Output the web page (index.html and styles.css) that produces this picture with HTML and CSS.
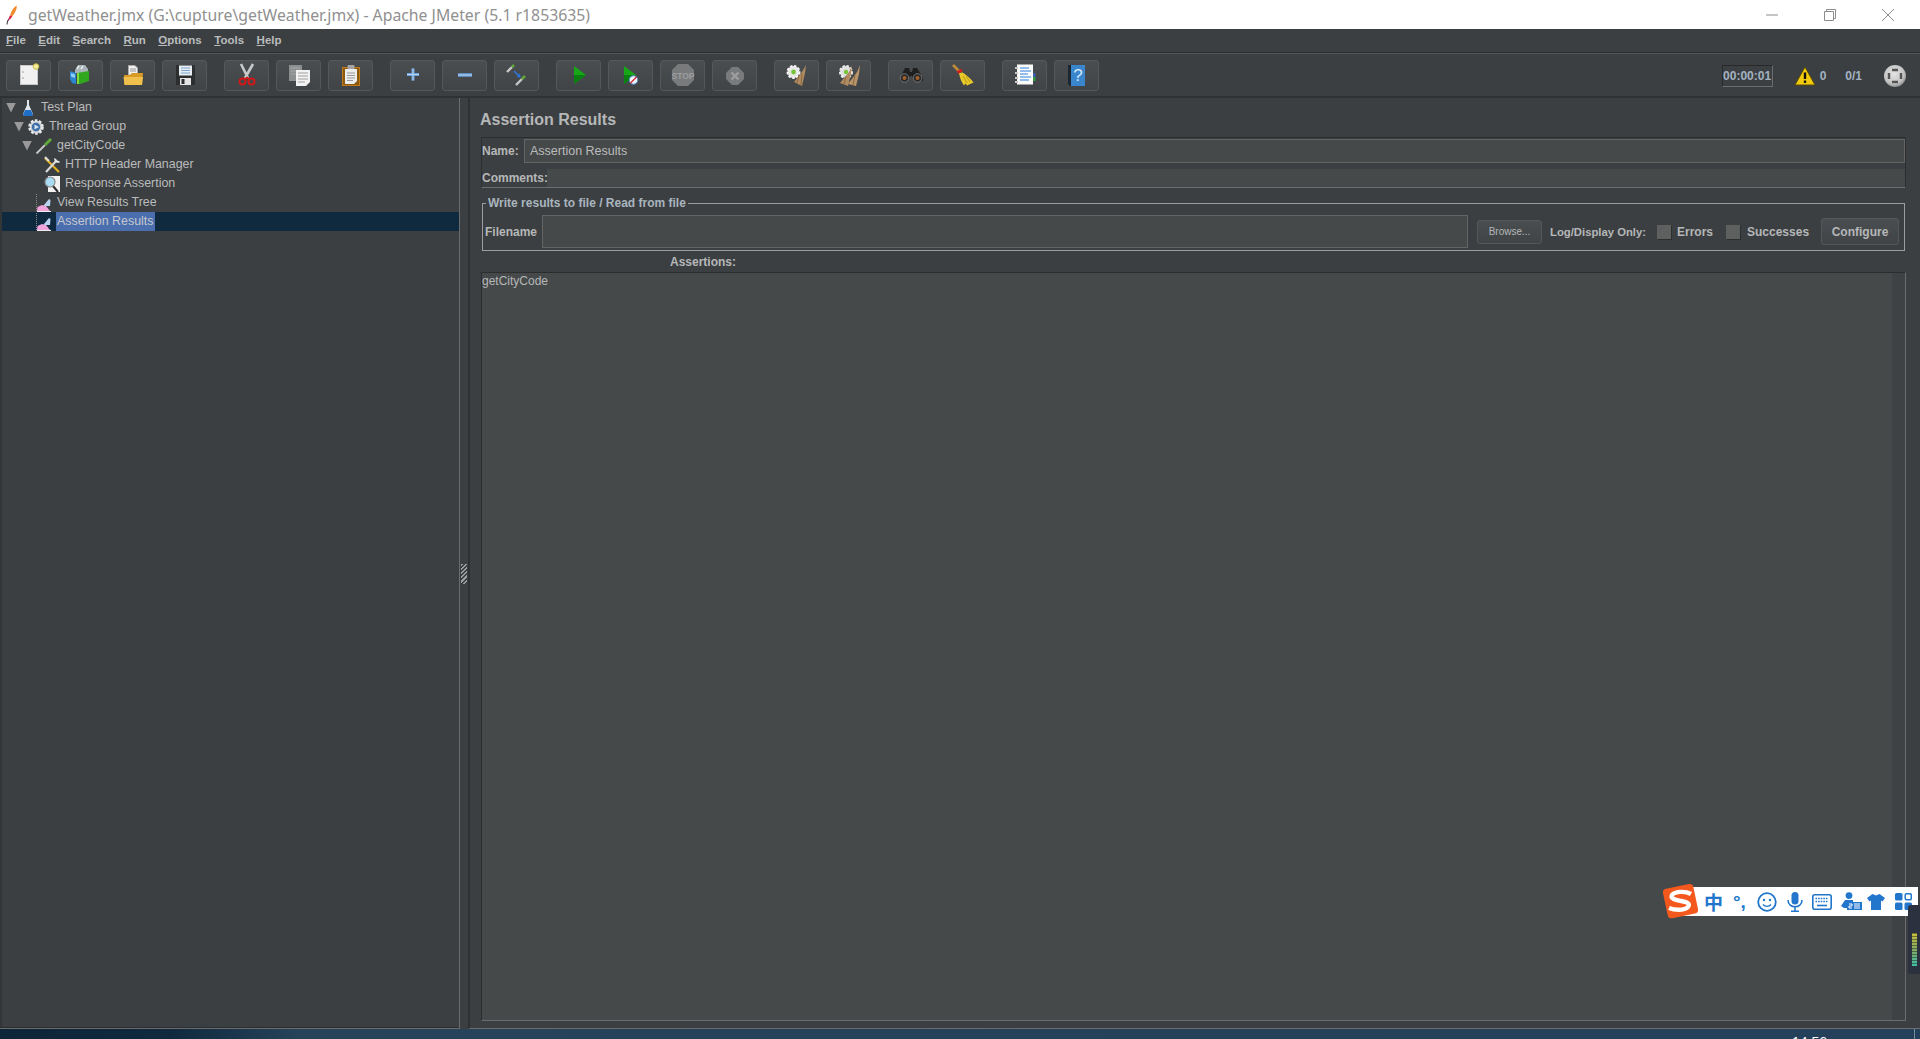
FILE: index.html
```html
<!DOCTYPE html>
<html lang="en">
<head>
    <meta charset="UTF-8">
    <title>getWeather.jmx (G:\cupture\getWeather.jmx) - Apache JMeter (5.1 r1853635)</title>
    <link rel="stylesheet" href="styles.css">
</head>
<body>
    <header class="titlebar">
        <svg class="app-icon" width="12" height="20" viewBox="0 0 12 20">
            <path d="M10.5 0.5C11.5 3 9 8 6.5 11L4 10.5C5 6.5 8 2 10.5 0.5Z" fill="#f08a2c"/>
            <path d="M6.5 11C5.5 12.5 4.5 14 3.5 14.5L2.5 13.5C3 12.5 3.5 11.5 4 10.5Z" fill="#d8203c"/>
            <path d="M3.5 14.5C3 15.5 2.5 16 2 16.2L1.6 15.4C2 14.8 2.2 14.2 2.5 13.5Z" fill="#8c1f6e"/>
            <path d="M1.6 15.4L1 19.5" stroke="#333" stroke-width="1" fill="none"/>
        </svg>
        <span class="window-title">getWeather.jmx (G:\cupture\getWeather.jmx) - Apache JMeter (5.1 r1853635)</span>
        <div class="window-controls">
            <span class="win-btn"><svg width="14" height="14" viewBox="0 0 14 14"><path d="M1 7H13" stroke="#8c8c8c"/></svg></span>
            <span class="win-btn"><svg width="14" height="14" viewBox="0 0 14 14"><path d="M1.5 3.5H10.5V12.5H1.5ZM3.5 3.5V1.5H12.5V10.5H10.5" stroke="#8c8c8c" fill="none"/></svg></span>
            <span class="win-btn"><svg width="14" height="14" viewBox="0 0 14 14"><path d="M1 1L13 13M13 1L1 13" stroke="#8c8c8c"/></svg></span>
        </div>
    </header>

    <nav class="menubar">
        <span class="menu-item"><u>F</u>ile</span>
        <span class="menu-item"><u>E</u>dit</span>
        <span class="menu-item"><u>S</u>earch</span>
        <span class="menu-item"><u>R</u>un</span>
        <span class="menu-item"><u>O</u>ptions</span>
        <span class="menu-item"><u>T</u>ools</span>
        <span class="menu-item"><u>H</u>elp</span>
    </nav>

    <div class="toolbar">
        <div class="tool-group">
            <button class="tool-btn" title="New"><svg width="45" height="31" viewBox="0 0 45 31">
                <rect x="14.5" y="5.5" width="17" height="19" fill="#f1f1f1" stroke="#c8c8c8"/>
                <circle cx="17" cy="12" r=".8" fill="#999"/><circle cx="17" cy="18" r=".8" fill="#999"/>
                <circle cx="30" cy="6.5" r="2.8" fill="#f7ef9a" stroke="#c9b94a"/>
            </svg></button>
            <button class="tool-btn" title="Templates"><svg width="45" height="31" viewBox="0 0 45 31">
                <path d="M17 10L20 5H27L30 9V13H17Z" fill="#a9b4b8"/>
                <path d="M19 9L21 6M23 9L25 6" stroke="#e8eef0" stroke-width="1.4"/>
                <path d="M12 11L18 13V24L14 23L12 19Z" fill="#2b86d0"/>
                <path d="M13 13L17 14.5V18L13 16.5Z" fill="#8fcdf5"/>
                <path d="M19 13L31 11V21L22 24H19Z" fill="#2fa81e"/>
                <path d="M19 13H21V24H19Z" fill="#7ddb40"/>
            </svg></button>
            <button class="tool-btn" title="Open"><svg width="45" height="31" viewBox="0 0 45 31">
                <path d="M18.5 5.5H25L27.5 8V15H18.5Z" fill="#f0f0f0" stroke="#aaa"/>
                <path d="M20 9H26M20 11H26" stroke="#999"/>
                <path d="M14 15H20L22 13H33L32 24.5H14.5Z" fill="#d89c24"/>
                <path d="M13.5 17H33L32 25H14.5Z" fill="#efc04c"/>
            </svg></button>
            <button class="tool-btn" title="Save"><svg width="45" height="31" viewBox="0 0 45 31">
                <path d="M14 5H32L33 6V25H14Z" fill="#2c2e30"/>
                <rect x="17" y="5.5" width="13" height="10" fill="#e8edf2"/>
                <path d="M19 8H28M19 10.5H28M19 13H28" stroke="#7ea6d0"/>
                <rect x="18" y="18" width="11" height="7" fill="#e4e4e4"/>
                <rect x="19.5" y="19" width="3" height="5" fill="#2c2e30"/>
            </svg></button>
        </div>
        <div class="tool-group">
            <button class="tool-btn" title="Cut"><svg width="45" height="31" viewBox="0 0 45 31">
                <path d="M17 4L24 18M29 4L21 18" stroke="#c6c9c9" stroke-width="2.6" fill="none"/>
                <circle cx="18.5" cy="21.5" r="3" fill="none" stroke="#d01818" stroke-width="2"/>
                <circle cx="27.5" cy="21.5" r="3" fill="none" stroke="#d01818" stroke-width="2"/>
                <path d="M21 19L23 17.5L25 19" stroke="#d01818" stroke-width="1.6" fill="none"/>
            </svg></button>
            <button class="tool-btn" title="Copy"><svg width="45" height="31" viewBox="0 0 45 31">
                <rect x="13" y="5" width="13" height="16" fill="#8c8f90"/>
                <path d="M15 8H24M15 11H24M15 14H24" stroke="#a8a8a8"/>
                <path d="M20 10H34V22L30 26H20Z" fill="#f2f2f2"/>
                <path d="M22 13H32M22 16H32M22 19H32M22 22H29" stroke="#a0a0a0"/>
            </svg></button>
            <button class="tool-btn" title="Paste"><svg width="45" height="31" viewBox="0 0 45 31">
                <rect x="14.5" y="7.5" width="17" height="18" fill="#8a5a10" stroke="#bf7a18"/>
                <path d="M17 9H29V21L26 24H17Z" fill="#ededed"/>
                <path d="M19 13H27M19 15.5H27M19 18H27M19 20.5H25" stroke="#9a9a9a"/>
                <rect x="19.5" y="5" width="7" height="4" rx="1" fill="#a5a5a5"/>
            </svg></button>
        </div>
        <div class="tool-group">
            <button class="tool-btn" title="Expand All"><svg width="45" height="31" viewBox="0 0 45 31">
                <path d="M17 14.5H29M23 8.5V20.5" stroke="#6da2dc" stroke-width="3"/>
                <path d="M17 14.5H29M23 8.5V20.5" stroke="#b6d4f2" stroke-width="1"/>
            </svg></button>
            <button class="tool-btn" title="Collapse All"><svg width="45" height="31" viewBox="0 0 45 31">
                <path d="M16 15H30" stroke="#6da2dc" stroke-width="3.5"/>
                <path d="M16 15H30" stroke="#b6d4f2" stroke-width="1"/>
            </svg></button>
            <button class="tool-btn" title="Toggle"><svg width="45" height="31" viewBox="0 0 45 31">
                <path d="M13 12L18 7" stroke="#c8c8c8" stroke-width="2.4"/>
                <path d="M18 7L20 5" stroke="#5fa83a" stroke-width="2.6"/>
                <path d="M22 25L28 19" stroke="#c8c8c8" stroke-width="2.4"/>
                <path d="M28 19L31 16" stroke="#5fa83a" stroke-width="2.6"/>
                <path d="M20 11L25 16" stroke="#2a78e0" stroke-width="1.4"/>
                <path d="M26.5 17.5L22.5 17L26 13.5Z" fill="#2a78e0"/>
            </svg></button>
        </div>
        <div class="tool-group">
            <button class="tool-btn" title="Start"><svg width="45" height="31" viewBox="0 0 45 31">
                <path d="M18 6L30 15L18 24Z" fill="#16a816"/>
                <path d="M18 15H30L18 24Z" fill="#0b7f12"/>
            </svg></button>
            <button class="tool-btn" title="Start no pauses"><svg width="45" height="31" viewBox="0 0 45 31">
                <path d="M16 6L28 15L16 24Z" fill="#16a816"/>
                <path d="M16 15H28L16 24Z" fill="#0b7f12"/>
                <circle cx="25.5" cy="20" r="4.2" fill="#eef4fb" stroke="#5b8ed0"/>
                <path d="M22.5 23L28.5 17" stroke="#d8242c" stroke-width="1.3"/>
            </svg></button>
            <button class="tool-btn" title="Stop"><svg width="45" height="31" viewBox="0 0 45 31">
                <path d="M18 4H28L34 10V20L28 26H18L12 20V10Z" fill="#787a7b"/>
                <text x="23" y="18.5" class="stop-label" text-anchor="middle">STOP</text>
            </svg></button>
            <button class="tool-btn" title="Shutdown"><svg width="45" height="31" viewBox="0 0 45 31">
                <path d="M20 7H26L32 13V19L26 25H20L14 19V13Z" fill="#787a7b"/>
                <path d="M19.5 12.5L26.5 19.5M26.5 12.5L19.5 19.5" stroke="#9c9e9f" stroke-width="2.4"/>
            </svg></button>
        </div>
        <div class="tool-group">
            <button class="tool-btn" title="Clear"><svg width="45" height="31" viewBox="0 0 45 31">
                <circle cx="19.5" cy="12" r="6" fill="#e8e8e8" stroke="#f6f6f6" stroke-width="2" stroke-dasharray="2.5 1.5"/>
                <circle cx="19.5" cy="12" r="2.4" fill="#76c43a"/>
                <path d="M32 5L28 12L20 22L28 26L31 13Z" fill="#b08a60"/>
                <path d="M25 15L23 23M28 14L27 25" stroke="#8a6840"/>
            </svg></button>
            <button class="tool-btn" title="Clear All"><svg width="45" height="31" viewBox="0 0 45 31">
                <circle cx="20" cy="12" r="6" fill="#e0e0e0" stroke="#eee" stroke-width="2" stroke-dasharray="2.5 1.5"/>
                <circle cx="20" cy="12" r="2.2" fill="#76c43a"/>
                <path d="M26 5L23 12L14 23L22 26L25 14Z" fill="#b08a60"/>
                <path d="M34 5L31 12L22 24L30 26L33 14Z" fill="#b89468"/>
                <path d="M20 16L18 24M29 15L27 25" stroke="#8a6840"/>
            </svg></button>
        </div>
        <div class="tool-group">
            <button class="tool-btn" title="Search"><svg width="45" height="31" viewBox="0 0 45 31">
                <path d="M17 8H21L22 12H24L25 8H29L35 18V21H26L24 16H22L20 21H12V18Z" fill="#1f1f1f"/>
                <circle cx="16.5" cy="18" r="4.3" fill="#2a2a2a" stroke="#777"/>
                <circle cx="29.5" cy="18" r="4.3" fill="#2a2a2a" stroke="#777"/>
                <circle cx="16.5" cy="18" r="2" fill="#a3602a"/>
                <circle cx="29.5" cy="18" r="2" fill="#a3602a"/>
            </svg></button>
            <button class="tool-btn" title="Reset Search"><svg width="45" height="31" viewBox="0 0 45 31">
                <path d="M13 5L19 11" stroke="#c08a3a" stroke-width="2.6"/>
                <path d="M19 13C20 19 22 23 24 25.5L25.5 23.5L27 25.5L33.5 22.5C31 19 27 15 22.5 12.5Z" fill="#e8c828"/>
                <path d="M23 16L27 23M26 16L30 22" stroke="#b89a14"/>
                <path d="M17.5 12.5L22 10" stroke="#d01f1f" stroke-width="3"/>
            </svg></button>
        </div>
        <div class="tool-group">
            <button class="tool-btn" title="Function Helper"><svg width="45" height="31" viewBox="0 0 45 31">
                <rect x="15" y="4.5" width="16" height="20" fill="#fbfbfb"/>
                <path d="M18 8H27M18 11H29M18 14H26M18 17H29M18 20H27" stroke="#2b80e0"/>
                <path d="M13 8H16M13 13H16M13 18H16M13 22H16" stroke="#c8c8c8" stroke-width="2"/>
                <rect x="31" y="13" width="2.5" height="4" fill="#3a60b0"/>
                <rect x="31" y="17" width="2.5" height="4" fill="#2f9a40"/>
            </svg></button>
            <button class="tool-btn" title="Help"><svg width="45" height="31" viewBox="0 0 45 31">
                <path d="M14 5H18V26H16L14 24Z" fill="#1b2833"/>
                <rect x="17" y="5" width="14" height="21" fill="#3a86cc"/>
                <text x="24" y="21" class="help-label" text-anchor="middle">?</text>
            </svg></button>
        </div>

        <div class="status">
            <span class="timer">00:00:01</span>
            <svg class="warn-icon" width="22" height="20" viewBox="0 0 22 20">
                <path d="M11 1L21 19H1Z" fill="#f2cc0c" stroke="#5a4c08" stroke-linejoin="round"/>
                <path d="M11 6.5V13" stroke="#111" stroke-width="2.4"/>
                <rect x="9.8" y="14.5" width="2.4" height="2.4" fill="#111"/>
            </svg>
            <span class="error-count">0</span>
            <span class="thread-count">0/1</span>
            <svg class="loggers" width="22" height="22" viewBox="0 0 22 22">
                <defs>
                    <radialGradient id="loggerShade" cx="45%" cy="40%" r="60%">
                        <stop offset="0" stop-color="#e4e4e4"/>
                        <stop offset=".75" stop-color="#c4c4c4"/>
                        <stop offset="1" stop-color="#8e8e8e"/>
                    </radialGradient>
                </defs>
                <circle cx="11" cy="11" r="11" fill="url(#loggerShade)"/>
                <path d="M8 5H14M8 17H14M5 8V14M17 8V14" stroke="#555" stroke-width="2.4" fill="none"/>
            </svg>
        </div>
    </div>

    <main class="workspace">
        <aside class="tree-pane">
            <div class="tree-row lvl-plan">
                <span class="twisty"></span>
                <svg class="tree-icon" width="18" height="18" viewBox="0 0 18 18">
                    <path d="M8 1H10V6L14 15L13 17H5L4 15L8 6Z" fill="#dfe6ee"/>
                    <path d="M6.2 11H11.8L14 15.5L13 17H5L4 15.5Z" fill="#1f6ec8"/>
                </svg>
                <span class="tree-label">Test Plan</span>
            </div>
            <div class="tree-row lvl-group">
                <span class="twisty"></span>
                <svg class="tree-icon" width="18" height="18" viewBox="0 0 18 18">
                    <circle cx="9" cy="9" r="6.5" fill="#c8ccd0" stroke="#e6e8ea" stroke-width="2.6" stroke-dasharray="2.6 1.5"/>
                    <circle cx="9" cy="9" r="4.2" fill="#3c6ea8"/>
                    <path d="M7.5 6.5L12 9L7.5 11.5Z" fill="#d8e6f4"/>
                </svg>
                <span class="tree-label">Thread Group</span>
            </div>
            <div class="tree-row lvl-sampler">
                <span class="twisty"></span>
                <svg class="tree-icon" width="18" height="18" viewBox="0 0 18 18">
                    <path d="M1.5 16.5L10 8" stroke="#c8c8c8" stroke-width="1.8"/>
                    <path d="M10 8L16 2" stroke="#5fa83a" stroke-width="3"/>
                </svg>
                <span class="tree-label">getCityCode</span>
            </div>
            <div class="tree-row lvl-child">
                <svg class="tree-icon" width="18" height="18" viewBox="0 0 18 18">
                    <path d="M2 2L16 16" stroke="#e0b020" stroke-width="2.2"/>
                    <path d="M2 1L6 5" stroke="#ddd" stroke-width="2"/>
                    <path d="M3 16L14 4" stroke="#d8d8d8" stroke-width="2.2"/>
                    <path d="M12 2.5A3 3 0 0 0 16.5 5.5" stroke="#e8e8e8" stroke-width="1.8" fill="none"/>
                </svg>
                <span class="tree-label">HTTP Header Manager</span>
            </div>
            <div class="tree-row lvl-child">
                <svg class="tree-icon" width="18" height="18" viewBox="0 0 18 18">
                    <rect x="5" y="1" width="12" height="16" fill="#f2f2f2"/>
                    <path d="M10 11L15 17" stroke="#2a2a2a" stroke-width="2"/>
                    <circle cx="7" cy="7" r="5" fill="#a9dcf5" stroke="#8a8a8a" stroke-width="1.2"/>
                </svg>
                <span class="tree-label">Response Assertion</span>
            </div>
            <div class="tree-row lvl-listener">
                <svg class="tree-icon" width="18" height="18" viewBox="0 0 18 18">
                    <path d="M1.5 0V18" stroke="#8a8a8a" stroke-dasharray="1 1"/>
                    <path d="M2 17L2.5 13L7 11L11 12L15 17Z" fill="#f0a4dc"/>
                    <path d="M9 11L14 5L15.5 6L15 12H9Z" fill="#b8d4f0"/>
                    <path d="M2 17.5H16" stroke="#eee"/>
                </svg>
                <span class="tree-label">View Results Tree</span>
            </div>
            <div class="tree-row lvl-listener selected">
                <svg class="tree-icon" width="18" height="18" viewBox="0 0 18 18">
                    <path d="M1.5 0V18" stroke="#8a8a8a" stroke-dasharray="1 1"/>
                    <path d="M2 17L2.5 13L7 11L11 12L15 17Z" fill="#f0a4dc"/>
                    <path d="M9 11L14 5L15.5 6L15 12H9Z" fill="#b8d4f0"/>
                    <path d="M2 17.5H16" stroke="#eee"/>
                </svg>
                <span class="tree-label">Assertion Results</span>
            </div>
        </aside>

        <div class="divider"><span class="grip"></span></div>

        <section class="content-pane">
            <h1 class="pane-title">Assertion Results</h1>

            <div class="name-panel">
                <div class="name-row">
                    <label class="field-label">Name:</label>
                    <div class="text-field name-field">Assertion Results</div>
                </div>
                <div class="comment-row">
                    <label class="field-label">Comments:</label>
                    <div class="comment-field"></div>
                </div>
            </div>

            <fieldset class="file-group">
                <legend>Write results to file / Read from file</legend>
                <div class="file-row">
                    <label class="field-label filename-label">Filename</label>
                    <div class="text-field filename-field"></div>
                    <button class="btn browse-btn">Browse...</button>
                    <span class="field-label log-label">Log/Display Only:</span>
                    <span class="checkbox"></span>
                    <span class="field-label errors-label">Errors</span>
                    <span class="checkbox second"></span>
                    <span class="field-label successes-label">Successes</span>
                    <button class="btn configure-btn">Configure</button>
                </div>
            </fieldset>

            <div class="assertions-title">Assertions:</div>
            <div class="results-box">
                <div class="results-list"><span class="result-node">getCityCode</span></div>
                <div class="results-scroll"></div>
            </div>
        </section>
    </main>

    <footer class="desktop-strip"><span class="clock">14:56</span></footer>

    <!-- things that float over the window -->
    <div class="ime-bar">
        <svg class="ime-logo" width="38" height="36" viewBox="0 0 38 36">
            <rect x="3" y="3" width="31" height="30" rx="4" transform="rotate(-12 19 18)" fill="#f4581c"/>
            <path d="M29 11C24 8 13 8 10 12C8 16 14 17 19 18C24 19 29 20 26 24C22 28 12 27 7 25" stroke="#fff" stroke-width="4.4" fill="none"/>
        </svg>
        <span class="ime-zh">中</span>
        <span class="ime-punct">°,</span>
        <svg class="ime-icon" width="20" height="20" viewBox="0 0 20 20">
            <circle cx="10" cy="10" r="8.8" fill="none" stroke="#2277cc" stroke-width="1.8"/>
            <circle cx="7" cy="8" r="1.2" fill="#2277cc"/><circle cx="13" cy="8" r="1.2" fill="#2277cc"/>
            <path d="M6 12.5C8 15 12 15 14 12.5" fill="none" stroke="#2277cc" stroke-width="1.4"/>
        </svg>
        <svg class="ime-icon mic" width="16" height="20" viewBox="0 0 16 20">
            <rect x="4.5" y="0" width="7" height="12.5" rx="3.5" fill="#2277cc"/>
            <path d="M1 8C1 17 15 17 15 8M8 15V19M4 19.3H12" fill="none" stroke="#2277cc" stroke-width="1.6"/>
        </svg>
        <svg class="ime-icon" width="20" height="16" viewBox="0 0 20 16">
            <rect x="0.8" y="0.8" width="18.4" height="14.4" rx="2" fill="none" stroke="#2277cc" stroke-width="1.6"/>
            <path d="M3.5 4.5H16.5M3.5 7.5H16.5" stroke="#2277cc" stroke-width="1.6" stroke-dasharray="1.6 1"/>
            <path d="M5 11.5H15" stroke="#2277cc" stroke-width="1.6"/>
        </svg>
        <svg class="ime-icon" width="21" height="20" viewBox="0 0 21 20">
            <circle cx="8" cy="3.6" r="3.4" fill="#2277cc"/>
            <path d="M0 14L4 8H12V13H6V16H3Z" fill="#2277cc"/>
            <rect x="6" y="10" width="15" height="8" fill="#2277cc"/>
            <path d="M8 12H11V14H8V16H11M13 12H19M13 14H19M13 16H19" stroke="#fff" fill="none"/>
        </svg>
        <svg class="ime-icon shirt" width="18" height="18" viewBox="0 0 18 18">
            <path d="M5.5 1L9 2.5L12.5 1L18 5L15.5 8.5L14 7.5V17H4V7.5L2.5 8.5L0 5Z" fill="#2277cc"/>
        </svg>
        <svg class="ime-icon grid" width="17" height="17" viewBox="0 0 17 17">
            <rect x="0" y="0" width="7.5" height="7.5" rx="1.5" fill="#2277cc"/>
            <rect x="10.2" y="0.7" width="6.1" height="6.1" rx="1.5" fill="none" stroke="#2277cc" stroke-width="1.5"/>
            <rect x="0" y="9.5" width="7.5" height="7.5" rx="1.5" fill="#2277cc"/>
            <rect x="9.5" y="9.5" width="7.5" height="7.5" rx="1.5" fill="#2277cc"/>
        </svg>
    </div>
    <div class="meter-widget"><span class="meter-bars"></span></div>
</body>
</html>
```

FILE: styles.css
```css
html, body {
    margin: 0;
    padding: 0;
    height: 100%;
}

body {
    width: 1920px;
    height: 1039px;
    overflow: hidden;
    display: flex;
    flex-direction: column;
    background-color: #3c3f41;
    color: #bbbbbb;
    font-family: "Liberation Sans", Arial, sans-serif;
    font-size: 12px;
}

/* window title */
.titlebar {
    height: 29px;
    flex: none;
    display: flex;
    align-items: center;
    background-color: #ffffff;
    padding-left: 6px;
}

.app-icon {
    margin-right: 10px;
}

.window-title {
    font-family: "Noto Sans", sans-serif;
    font-size: 15.8px;
    color: #909090;
}

.window-controls {
    display: flex;
    margin-left: auto;
    padding-right: 3px;
}

.win-btn {
    width: 58px;
    height: 29px;
    display: flex;
    align-items: center;
    justify-content: center;
}

/* menu */
.menubar {
    height: 22px;
    flex: none;
    display: flex;
    align-items: center;
    gap: 12.5px;
    padding: 0 0 1px 6px;
    border-bottom: 1px solid #2a2c2d;
    font-size: 11.5px;
    font-weight: bold;
}

.menu-item {
    color: #b9bcbd;
}

/* toolbar */
.toolbar {
    height: 41px;
    flex: none;
    display: flex;
    align-items: center;
    gap: 17px;
    padding: 1px 0 0 6px;
    border-top: 1px solid #555859;
    border-bottom: 2px solid #2e3031;
}

.tool-group {
    display: flex;
    gap: 7px;
}

.tool-btn {
    width: 45px;
    height: 31px;
    padding: 0;
    border: 1px solid #54585a;
    border-radius: 3px;
    background: linear-gradient(#4a4e50, #404446);
    display: block;
    overflow: hidden;
}

.tool-btn svg {
    display: block;
    margin: -1px;
}

.stop-label {
    font-family: "Liberation Sans", sans-serif;
    font-size: 8.5px;
    font-weight: bold;
    fill: #9c9e9f;
}

.help-label {
    font-family: "Liberation Sans", sans-serif;
    font-size: 17px;
    fill: #d6e8f8;
}

.status {
    margin-left: auto;
    display: flex;
    align-items: center;
    padding-right: 14px;
    font-weight: bold;
    color: #a3b2c2;
}

.timer {
    width: 51px;
    height: 22px;
    box-sizing: border-box;
    display: flex;
    align-items: center;
    justify-content: center;
    border: 1px solid;
    border-color: #262829 #6a6d6e #6a6d6e #262829;
    white-space: nowrap;
}

.warn-icon {
    margin-left: 21px;
}

.error-count {
    margin-left: 4px;
}

.thread-count {
    margin-left: 19px;
}

.loggers {
    margin-left: 22px;
}

/* main area */
.workspace {
    flex: 1;
    min-height: 0;
    display: flex;
}

.tree-pane {
    width: 457px;
    flex: none;
    border-right: 1px solid #6a6d6e;
    border-bottom: 1px solid #6a6d6e;
    box-shadow: inset 0 -1px 0 #2b2d2e, inset 2px 0 0 #333637;
    padding-left: 2px;
}

.tree-row {
    height: 19px;
    display: flex;
    align-items: center;
    color: #b9bbbc;
    font-size: 12.4px;
}

.tree-label {
    margin-top: -1px;
}

.lvl-plan { padding-left: 4px; }
.lvl-group { padding-left: 12px; }
.lvl-sampler { padding-left: 20px; }
.lvl-child { padding-left: 41px; }
.lvl-listener { padding-left: 33px; }

.twisty {
    width: 10px;
    height: 10px;
    flex: none;
    margin-right: 3px;
    background-color: #9a9a9a;
    clip-path: polygon(0 0, 100% 0, 50% 100%);
}

.tree-icon {
    flex: none;
    margin-right: 4px;
}

.tree-row.selected {
    background-color: #0f2a3f;
}

.tree-row.selected .tree-label {
    background-color: #4b6eaf;
    color: #c4c8cc;
    height: 19px;
    line-height: 18px;
    margin: 0 0 0 -1px;
    padding: 0 2px 0 1px;
}

.divider {
    width: 8px;
    flex: none;
    display: flex;
    align-items: flex-start;
    justify-content: center;
    padding-top: 466px;
    box-sizing: border-box;
}

.grip {
    width: 6px;
    height: 20px;
    background: repeating-linear-gradient(135deg, #9a9c9d 0 1.5px, #3c3f41 1.5px 3px);
}

.content-pane {
    flex: 1;
    min-width: 0;
    display: flex;
    flex-direction: column;
    padding: 0 14px 1px 11px;
    border-left: 2px solid #2e3031;
    border-bottom: 1px solid #6a6d6e;
    box-sizing: border-box;
}

.pane-title {
    margin: 13px 0 8px -1px;
    font-size: 16px;
    line-height: 18px;
    font-weight: bold;
    color: #b5b7b8;
}

.field-label {
    font-weight: bold;
    color: #b5b7b8;
    white-space: nowrap;
}

.text-field {
    box-sizing: border-box;
    background-color: #45494a;
    border: 1px solid #646464;
}

.name-panel {
    height: 51px;
    flex: none;
    box-sizing: border-box;
    border: 1px solid #2b2d2e;
    border-bottom-color: #6a6d6e;
    padding-top: 1px;
}

.name-row {
    height: 24px;
    display: flex;
    align-items: center;
}

.name-row .field-label {
    width: 42px;
    flex: none;
}

.name-field {
    flex: 1;
    height: 24px;
    line-height: 22px;
    padding-left: 5px;
    font-size: 12.5px;
}

.comment-row {
    height: 18px;
    margin-top: 6px;
    display: flex;
    align-items: center;
}

.comment-row .field-label {
    width: 65px;
    flex: none;
}

.comment-field {
    flex: 1;
    height: 18px;
    background-color: #45494a;
}

.file-group {
    flex: none;
    margin: 8px 0 0 1px;
    width: 1423px;
    min-width: 0;
    box-sizing: border-box;
    border: 1px solid #9a9c9d;
    padding: 5px 5px 2px 2px;
}

.file-group legend {
    margin-left: 1px;
    padding: 0 2px;
    font-weight: bold;
    line-height: 14px;
    color: #a9b5bf;
}

.file-row {
    display: flex;
    align-items: center;
    height: 33px;
}

.filename-label {
    width: 57px;
    flex: none;
}

.filename-field {
    flex: 1;
    height: 33px;
}

.btn {
    box-sizing: border-box;
    padding: 0;
    border: 1px solid #54585a;
    border-radius: 3px;
    background: linear-gradient(#4a4e50, #404446);
    color: #b5b7b8;
    font-family: "Liberation Sans", Arial, sans-serif;
}

.browse-btn {
    width: 65px;
    height: 24px;
    margin-left: 9px;
    font-size: 10px;
    flex: none;
}

.log-label {
    width: 96px;
    flex: none;
    margin-left: 8px;
    font-size: 11.3px;
}

.checkbox {
    width: 14px;
    height: 14px;
    flex: none;
    margin-left: 11px;
    margin-right: 6px;
    background-color: #5e6060;
    box-shadow: 1px 1px 0 #2b2d2e;
}

.checkbox.second {
    margin-left: 13px;
    margin-right: 7px;
}

.errors-label {
    width: 36px;
    flex: none;
}

.successes-label {
    width: 63px;
    flex: none;
}

.configure-btn {
    width: 78px;
    height: 27px;
    margin-left: 11px;
    font-size: 12px;
    font-weight: bold;
    flex: none;
}

.assertions-title {
    flex: none;
    height: 14px;
    line-height: 14px;
    margin: 4px 0 3px 189px;
    font-weight: bold;
    color: #b5b7b8;
}

.results-box {
    flex: 1;
    min-height: 0;
    display: flex;
    margin-bottom: 6px;
    border: 1px solid;
    border-color: #2b2d2e #6a6d6e #6a6d6e #2b2d2e;
}

.results-list {
    flex: 1;
    background-color: #45494a;
    padding-top: 1px;
    font-size: 12px;
    line-height: 15px;
    color: #b5b7b8;
}

.results-scroll {
    width: 13px;
    flex: none;
    background-color: #3f4244;
}

/* strip of desktop under the window */
.desktop-strip {
    height: 10px;
    flex: none;
    overflow: hidden;
    display: flex;
    justify-content: flex-end;
    padding-right: 93px;
    box-sizing: border-box;
    background: linear-gradient(#7a8a96, #7a8a96) no-repeat 1914px 0 / 1px 100%,
                linear-gradient(to right, #0e2539 0, #10293e 170px, #26435a 300px, #24405a 100%);
}

.clock {
    color: #ffffff;
    font-size: 14px;
    line-height: 16px;
    padding-top: 5px;
}

/* input method bar and desktop meter lying over the window */
.ime-bar {
    position: absolute;
    left: 1683px;
    top: 887px;
    width: 235px;
    height: 29px;
    background-color: #ffffff;
    display: flex;
    align-items: center;
    padding-left: 21px;
    box-sizing: border-box;
    color: #2277cc;
}

.ime-logo {
    position: absolute;
    left: -21px;
    top: -4px;
}

.ime-zh {
    width: 19px;
    flex: none;
    font-family: "Noto Sans CJK SC", sans-serif;
    font-size: 19px;
    font-weight: bold;
    line-height: 20px;
}

.ime-punct {
    margin-left: 10px;
    width: 15px;
    flex: none;
    font-family: "Liberation Sans", sans-serif;
    font-size: 19px;
    font-weight: bold;
    line-height: 20px;
}

.ime-icon {
    margin-left: 9px;
    flex: none;
}

.ime-icon.mic {
    margin-left: 10px;
}

.ime-icon.shirt {
    margin-left: 5px;
}

.ime-icon.grid {
    margin-left: 10px;
}

.meter-widget {
    position: absolute;
    left: 1908px;
    top: 905px;
    width: 12px;
    height: 69px;
    box-sizing: border-box;
    background-color: #2c3140;
    border-radius: 3px 0 0 3px;
    padding: 28px 3px 8px 4px;
}

.meter-bars {
    display: block;
    height: 33px;
    background: repeating-linear-gradient(#00000066 0 1px, transparent 1px 3px),
                linear-gradient(#c8c040, #7ea868 55%, #40c0a8);
}
```
